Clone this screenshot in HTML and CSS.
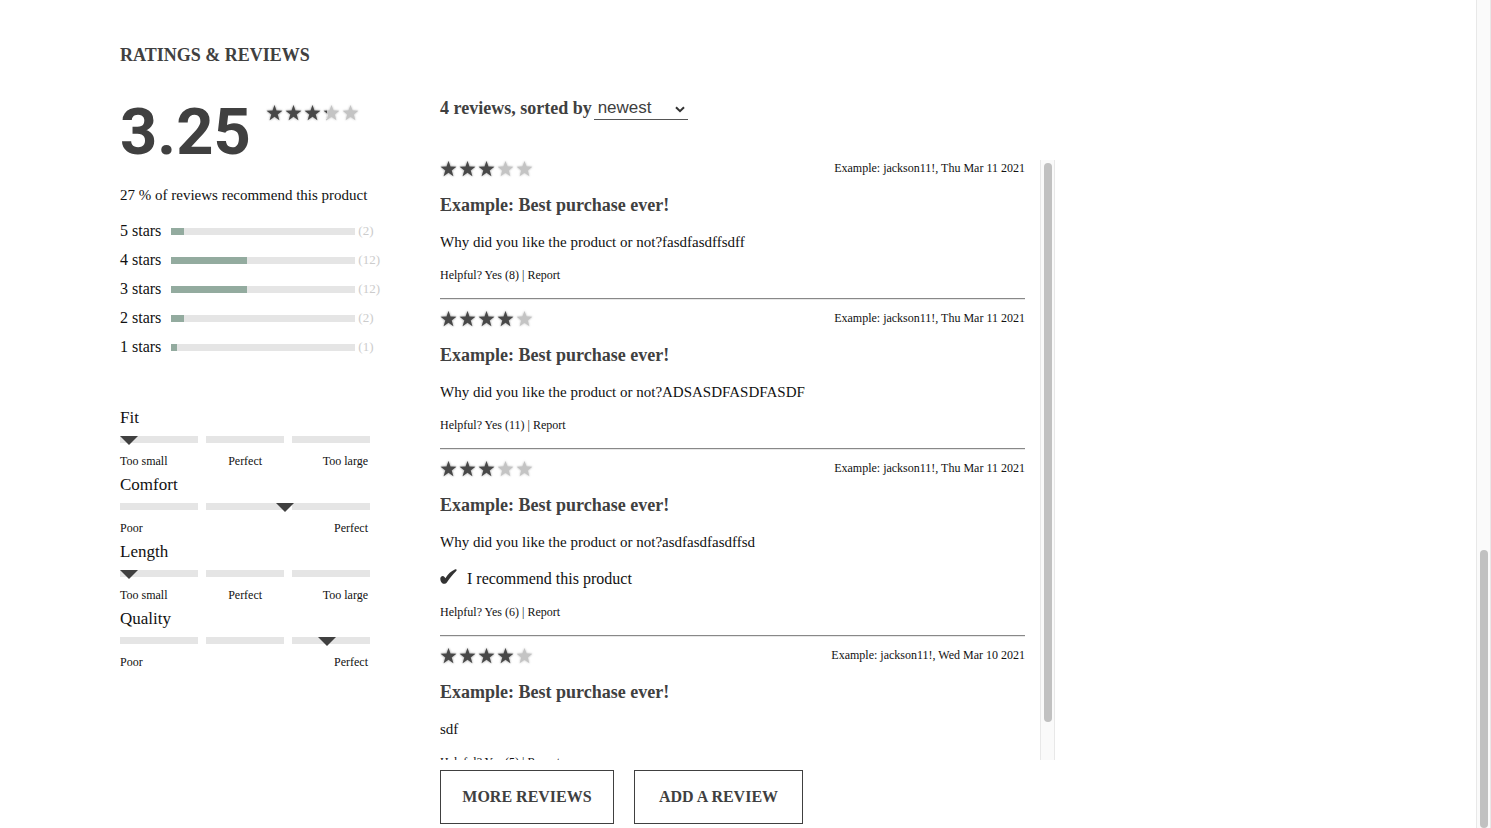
FILE: index.html
```html
<!DOCTYPE html>
<html lang="en">
<head>
<meta charset="utf-8">
<title>Ratings &amp; Reviews</title>
<link rel="stylesheet" href="styles.css">
</head>
<body>
<svg class="defs" aria-hidden="true">
  <defs>
    <path id="star" d="M8.500 1 L10.500 6.600 L16.400 6.800 L11.700 10.400 L13.400 16.200 L8.500 12.800 L3.600 16.200 L5.300 10.400 L.6 6.800 L6.500 6.600Z"/>
    <symbol id="stars" viewBox="0 0 95 18">
      <use href="#star"/><use href="#star" x="19"/><use href="#star" x="38"/><use href="#star" x="57"/><use href="#star" x="76"/>
    </symbol>
  </defs>
</svg>
<main class="page">
  <h2 class="heading">RATINGS &amp; REVIEWS</h2>
  <div class="columns">
    <section class="summary">
      <div class="average">
        <span class="score">3.25</span>
        <span class="stars" role="img" aria-label="3.25 of 5"><svg class="base"><use href="#stars"/></svg><span class="fill" style="width:64%"><svg><use href="#stars"/></svg></span></span>
      </div>
      <p class="share">27 % of reviews recommend this product</p>
      <ul class="breakdown">
        <li>5 stars<span class="meter"><span style="width:7%"></span></span><span class="count">(2)</span></li>
        <li>4 stars<span class="meter"><span style="width:41%"></span></span><span class="count">(12)</span></li>
        <li>3 stars<span class="meter"><span style="width:41%"></span></span><span class="count">(12)</span></li>
        <li>2 stars<span class="meter"><span style="width:7%"></span></span><span class="count">(2)</span></li>
        <li>1 stars<span class="meter"><span style="width:3%"></span></span><span class="count">(1)</span></li>
      </ul>
      <div class="trait"><h3>Fit</h3><div class="scale"><i></i><i></i><i></i><b class="marker" style="left:0%"></b></div><div class="ends"><span>Too small</span><span>Perfect</span><span>Too large</span></div></div>
      <div class="trait"><h3>Comfort</h3><div class="scale"><i></i><i></i><i></i><b class="marker" style="left:62.4%"></b></div><div class="ends"><span>Poor</span><span>Perfect</span></div></div>
      <div class="trait"><h3>Length</h3><div class="scale"><i></i><i></i><i></i><b class="marker" style="left:0%"></b></div><div class="ends"><span>Too small</span><span>Perfect</span><span>Too large</span></div></div>
      <div class="trait"><h3>Quality</h3><div class="scale"><i></i><i></i><i></i><b class="marker" style="left:79.2%"></b></div><div class="ends"><span>Poor</span><span>Perfect</span></div></div>
    </section>
    <section class="reviews">
      <div class="sort">
        <label for="sort">4 reviews, sorted by</label>
        <span class="picker"><select id="sort"><option>newest</option><option>helpful</option><option>relevant</option></select><svg viewBox="0 0 10 7"><path d="M1 1.2 5 5.2 9 1.2"/></svg></span>
      </div>
      <div class="viewport">
        <div class="list">
          <article class="review">
            <div class="meta"><span class="stars" role="img" aria-label="3 of 5"><svg class="base"><use href="#stars"/></svg><span class="fill" style="width:60%"><svg><use href="#stars"/></svg></span></span><span class="by">Example: jackson11!, Thu Mar 11 2021</span></div>
            <h3>Example: Best purchase ever!</h3>
            <p class="text">Why did you like the product or not?fasdfasdffsdff</p>
            <p class="helpful">Helpful? Yes (8) | Report</p>
          </article>
          <article class="review">
            <div class="meta"><span class="stars" role="img" aria-label="4 of 5"><svg class="base"><use href="#stars"/></svg><span class="fill" style="width:80%"><svg><use href="#stars"/></svg></span></span><span class="by">Example: jackson11!, Thu Mar 11 2021</span></div>
            <h3>Example: Best purchase ever!</h3>
            <p class="text">Why did you like the product or not?ADSASDFASDFASDF</p>
            <p class="helpful">Helpful? Yes (11) | Report</p>
          </article>
          <article class="review">
            <div class="meta"><span class="stars" role="img" aria-label="3 of 5"><svg class="base"><use href="#stars"/></svg><span class="fill" style="width:60%"><svg><use href="#stars"/></svg></span></span><span class="by">Example: jackson11!, Thu Mar 11 2021</span></div>
            <h3>Example: Best purchase ever!</h3>
            <p class="text">Why did you like the product or not?asdfasdfasdffsd</p>
            <p class="recommend"><svg viewBox="0 0 17 20"><path d="M.3 9.400C.5 7 3.200 6.200 4.500 8L5.400 9.300C8 5 11.200 2 14.800.5 16.600-.2 17.200.8 16.200 1.900 12.500 5.600 9.800 9 7 13.300 5.900 15 3.400 15.300 2.300 14.200 1.300 13.200.2 11.400.3 9.400Z"/></svg>I recommend this product</p>
            <p class="helpful">Helpful? Yes (6) | Report</p>
          </article>
          <article class="review">
            <div class="meta"><span class="stars" role="img" aria-label="4 of 5"><svg class="base"><use href="#stars"/></svg><span class="fill" style="width:80%"><svg><use href="#stars"/></svg></span></span><span class="by">Example: jackson11!, Wed Mar 10 2021</span></div>
            <h3>Example: Best purchase ever!</h3>
            <p class="text">sdf</p>
            <p class="helpful">Helpful? Yes (5) | Report</p>
          </article>
        </div>
        <div class="track list-track"><div class="thumb"></div></div>
      </div>
      <div class="actions">
        <button class="more">MORE REVIEWS</button>
        <button class="add">ADD A REVIEW</button>
      </div>
    </section>
  </div>
</main>
<div class="track page-track"><div class="thumb"></div></div>
</body>
</html>
```

FILE: styles.css
```css
* { box-sizing: border-box; }
body {
  margin: 0;
  display: flex;
  height: 100vh;
  overflow: hidden;
  font-family: "Liberation Serif", serif;
  font-size: 15px;
  line-height: 20px;
  color: #111;
  background: #fff;
}
h2, h3, p, ul { margin: 0; padding: 0; }
.defs { position: absolute; width: 0; height: 0; }
.page { flex: 1; padding: 43px 60px 0 120px; }
.heading { font-size: 18px; line-height: 24px; color: #404040; }
.columns { display: grid; grid-template-columns: 260px minmax(0, 615px); gap: 60px; padding-top: 29px; }

/* Summary column */
.average { display: flex; gap: 15px; height: 72px; color: #404040; }
.score { font: bold 65px/72px Roboto, sans-serif; }
.average .stars { margin-top: 8px; }
.stars { position: relative; display: block; width: 95px; height: 18px; color: #484848; }
.stars svg { display: block; width: 95px; height: 18px; fill: currentColor; filter: drop-shadow(0 0 1px #bbb); }
.stars .base { color: #c4c4c4; }
.stars .fill { position: absolute; inset: 0 auto 0 0; overflow: hidden; }
.share { padding-top: 17px; }
.breakdown { list-style: none; padding: 11px 0 47px; font-size: 16px; }
.breakdown li { display: flex; align-items: center; height: 29px; white-space: nowrap; }
.meter { width: 184px; height: 7px; margin: 1px 3px 0 10px; background: #e5e5e5; }
.meter span { display: block; height: 7px; background: #93ab9f; }
.count { font-size: 13px; color: #ccc; }
.trait { width: 250px; height: 67px; }
.trait h3 { font-size: 17px; font-weight: normal; line-height: 20px; }
.scale { position: relative; display: flex; gap: 8px; margin: 8px 0; }
.scale i { flex: 1; height: 7px; background: #e5e5e5; }
.marker { position: absolute; top: 0; width: 18px; height: 9px; background: #404040; clip-path: polygon(0 0, 100% 0, 50% 100%); }
.ends { display: flex; justify-content: space-between; padding-right: 2px; font-size: 12px; }

/* Reviews column */
.sort { display: flex; align-items: center; gap: 2px; height: 24px; font-size: 18px; font-weight: bold; color: #404040; }
.picker { position: relative; border-bottom: 1px solid #555; width: 94px; height: 24px; }
.picker select { appearance: none; width: 100%; height: 23px; padding: 1px 0 0 4px; border: 0; background: none; font: 17px/22px "Liberation Sans", sans-serif; color: #404040; }
.picker svg { position: absolute; right: 3px; top: 10px; width: 10px; height: 7px; fill: none; stroke: #333; stroke-width: 2; pointer-events: none; }
.viewport { display: flex; gap: 15px; height: 600px; margin-top: 40px; }
.list { flex: 1; overflow: hidden; }
.review { border-bottom: 1px solid #888; box-shadow: 0 1px #e8e8e8; margin-bottom: 11px; padding-bottom: 15px; }
.meta { display: flex; justify-content: space-between; height: 33px; }
.by { font-size: 12px; line-height: 16px; }
.review h3 { font-size: 18px; line-height: 24px; color: #404040; }
.text { padding-top: 15px; }
.recommend { display: flex; align-items: center; gap: 10px; padding-top: 17px; font-size: 16px; }
.recommend svg { width: 17px; height: 20px; fill: #333; }
.helpful { padding-top: 15px; font-size: 12px; line-height: 16px; }
.actions { display: flex; gap: 20px; margin-top: 10px; }
.actions button { height: 54px; padding: 0; border: 1px solid #404040; background: #fff; color: #404040; font: bold 16px "Liberation Serif", serif; }
.actions .more { width: 174px; }
.actions .add { width: 169px; }

/* Scroll bars */
.track { flex: none; width: 15px; padding: 3px; border: solid #e8e8e8; border-width: 0 1px; background: #fafafa; }
.thumb { width: 8px; border-radius: 4px; background: #c1c1c1; }
.list-track .thumb { height: 559px; }
.page-track { padding-top: 550px; }
.page-track .thumb { height: 278px; }
```
